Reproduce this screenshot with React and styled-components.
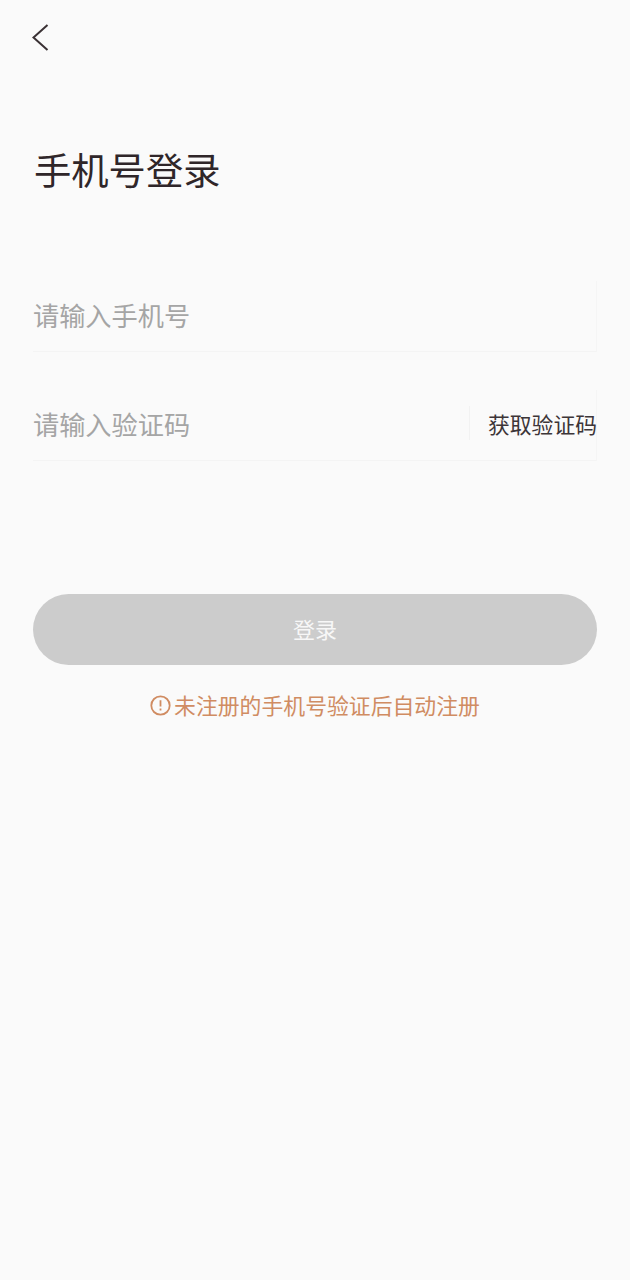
import React from 'react';
import styled, { createGlobalStyle } from 'styled-components';

const GlobalStyle = createGlobalStyle`
    html, body {
        margin: 0;
        padding: 0;
        background-color: #fafafa;
    }
    * {
        box-sizing: border-box;
    }
`;

const Page = styled.div`
    width: 630px;
    height: 1280px;
    overflow: hidden;
    padding: 24px 33px 0;
    background-color: #fafafa;
    font-family: 'Noto Sans CJK SC', 'Liberation Sans', sans-serif;
`;

const BackButton = styled.button`
    display: block;
    width: 18px;
    height: 27px;
    margin-left: -1px;
    padding: 0;
    border: 0;
    background: none;
    color: #3a3134;
`;

const Title = styled.h1`
    margin: 95px 0 0 1px;
    font-size: 37.3px;
    font-weight: 400;
    line-height: 46px;
    color: #2f2629;
`;

const Form = styled.div`
    margin-top: 89px;
    display: flex;
    flex-direction: column;
    gap: 38px;
`;

const Field = styled.div`
    height: 71px;
    padding-bottom: 2px;
    display: flex;
    align-items: center;
    justify-content: space-between;
    border-bottom: 1px solid #f4f4f4;
    border-right: 1px solid #f5f5f5;
`;

const Placeholder = styled.span`
    font-size: 26.2px;
    line-height: 36px;
    color: #a5a5a5;
`;

const CodeButton = styled.span`
    height: 34px;
    width: 127px;
    margin-bottom: 2px;
    padding-left: 18px;
    display: flex;
    align-items: center;
    border-left: 1px solid #f2f2f2;
    font-size: 21.8px;
    white-space: nowrap;
    color: #3d3538;
`;

const LoginButton = styled.button`
    display: block;
    width: 564px;
    height: 71px;
    margin-top: 133px;
    padding: 0 0 4px;
    border: 0;
    border-radius: 36px;
    background-color: #cccccc;
    color: #f7f7f7;
    font-family: inherit;
    font-size: 22px;
`;

const Notice = styled.div`
    margin-top: 26px;
    display: flex;
    align-items: center;
    justify-content: center;
    gap: 3px;
    font-size: 21.85px;
    line-height: 28px;
    color: #d08c62;
`;

const App = () => {
    return (
        <Page>
            <GlobalStyle />
            <BackButton aria-label="返回">
                <svg width="18" height="27" viewBox="0 0 18 27" fill="none" stroke="currentColor" strokeWidth="2">
                    <path d="M15.5 1 L1.5 13.5 L15.5 26" />
                </svg>
            </BackButton>
            <Title>手机号登录</Title>
            <Form>
                <Field>
                    <Placeholder>请输入手机号</Placeholder>
                </Field>
                <Field>
                    <Placeholder>请输入验证码</Placeholder>
                    <CodeButton>获取验证码</CodeButton>
                </Field>
            </Form>
            <LoginButton>登录</LoginButton>
            <Notice>
                <svg width="21" height="21" viewBox="0 0 21 21" fill="none" stroke="currentColor" strokeWidth="1.8">
                    <circle cx="10.5" cy="10.5" r="9.2" />
                    <path d="M10.5 5.2 V11.6 M10.5 13.6 V15.4" />
                </svg>
                未注册的手机号验证后自动注册
            </Notice>
        </Page>
    );
};

export default App;
